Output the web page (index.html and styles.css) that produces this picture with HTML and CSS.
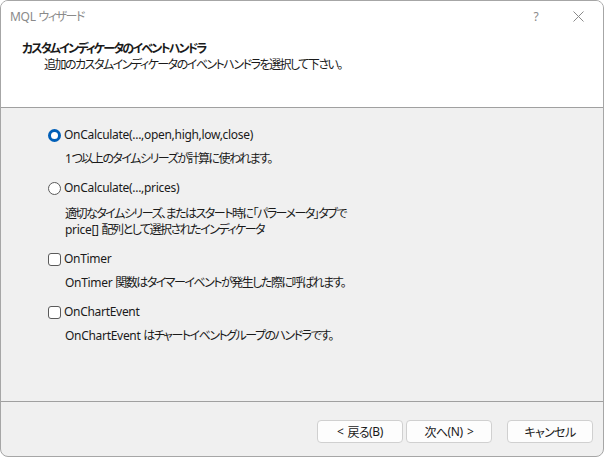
FILE: index.html
```html
<!DOCTYPE html>
<html lang="ja">
<head>
<meta charset="utf-8">
<title>MQL ウィザード</title>
<link rel="stylesheet" href="styles.css">
</head>
<body>
<div class="window">
  <div class="header">
    <div class="titlebar">
      <span class="title">MQL <span class="ja">ウィザード</span></span>
      <span class="tb-help">?</span>
      <span class="tb-close">
        <svg width="11" height="11" viewBox="0 0 11 11"><path d="M0.5 0.5L10.5 10.5M10.5 0.5L0.5 10.5" stroke="#8a8a8a" stroke-width="1" fill="none"/></svg>
      </span>
    </div>
    <div class="heading ja">カスタムインディケータのイベントハンドラ</div>
    <div class="subheading ja">追加のカスタムインディケータのイベントハンドラを選択して下さい。</div>
  </div>
  <div class="content">
    <div class="option">
      <div class="opt-row"><span class="radio checked"></span><span class="opt-label">OnCalculate(...,open,high,low,close)</span></div>
      <div class="desc">1<span class="ja">つ以上のタイムシリーズが計算に使われます。</span></div>
    </div>
    <div class="option">
      <div class="opt-row"><span class="radio"></span><span class="opt-label">OnCalculate(...,prices)</span></div>
      <div class="desc desc-2"><span class="ja">適切なタイムシリーズ、またはスタート時に「パラーメータ」タブで</span><br>price[] <span class="ja">配列として選択されたインディケータ</span></div>
    </div>
    <div class="option">
      <div class="opt-row"><span class="check"></span><span class="opt-label">OnTimer</span></div>
      <div class="desc">OnTimer <span class="ja">関数はタイマーイベントが発生した際に呼ばれます。</span></div>
    </div>
    <div class="option">
      <div class="opt-row"><span class="check"></span><span class="opt-label">OnChartEvent</span></div>
      <div class="desc">OnChartEvent <span class="ja">はチャートイベントグループのハンドラです。</span></div>
    </div>
  </div>
  <div class="footer">
    <div class="btn">&lt;<span class="ja gap">戻る</span>(B)</div>
    <div class="btn"><span class="ja">次へ</span>(N)<span class="gap">&gt;</span></div>
    <div class="btn btn-cancel"><span class="ja">キャンセル</span></div>
  </div>
</div>
</body>
</html>
```
FILE: styles.css
```css
html, body {
  margin: 0;
  padding: 0;
  background: #ffffff;
}
body {
  font-family: "Noto Sans", "Noto Sans CJK JP", sans-serif;
  font-size: 12px;
  letter-spacing: -0.3px;
  font-feature-settings: "palt";
  color: #1a1a1a;
}
.ja {
  letter-spacing: -1.5px;
}
.window {
  box-sizing: border-box;
  width: 604px;
  height: 457px;
  border: 1px solid #a6a6a6;
  border-radius: 8px;
  overflow: hidden;
  display: flex;
  flex-direction: column;
  background: #f0f0f0;
}
.header {
  background: #ffffff;
  height: 106px;
  border-bottom: 1px solid #a0a0a0;
  flex: none;
}
.titlebar {
  height: 30px;
  display: flex;
  align-items: center;
  padding-left: 9px;
}
.title {
  color: #8a8a8a;
  font-size: 12px;
  flex: 1;
}
.tb-help {
  color: #8a8a8a;
  font-size: 12px;
  width: 46px;
  text-align: center;
  margin-right: -4px;
}
.tb-close {
  width: 46px;
  display: flex;
  justify-content: center;
  margin-right: 2px;
}
.heading {
  font-weight: bold;
  padding-left: 21px;
  margin-top: 10px;
  line-height: 16px;
  letter-spacing: -1.8px;
}
.subheading {
  padding-left: 43px;
  line-height: 16px;
}
.content {
  flex: 1;
  padding: 19px 0 0 47px;
  border-bottom: 1px solid #a0a0a0;
}
.option {
  margin-bottom: 13px;
}
.opt-row {
  display: flex;
  align-items: center;
  height: 16px;
}
.radio {
  box-sizing: border-box;
  width: 13px;
  height: 13px;
  border: 1px solid #5a5a5a;
  border-radius: 50%;
  margin-right: 3px;
  background: #fff;
}
.radio.checked {
  border: 3.5px solid #005fb8;
  background: #ffffff;
}
.check {
  box-sizing: border-box;
  width: 13px;
  height: 13px;
  border: 1px solid #5a5a5a;
  border-radius: 3px;
  background: #fff;
  margin-right: 3px;
}
.opt-label {
  line-height: 16px;
}
.desc {
  padding-left: 17px;
  margin-top: 8px;
  line-height: 16px;
}
.desc-2 {
  margin-top: 10px;
}
.footer {
  height: 54px;
  flex: none;
  display: flex;
  align-items: flex-start;
  padding: 18px 0 0 316px;
  box-sizing: border-box;
}
.btn {
  box-sizing: border-box;
  width: 86px;
  height: 23px;
  border: 1px solid #d0d0d0;
  border-radius: 4px;
  background: #fdfdfd;
  display: flex;
  align-items: center;
  justify-content: center;
  margin-right: 3px;
}
.btn .ja {
  letter-spacing: -0.6px;
}
.btn .gap {
  margin-left: 4px;
}
.btn-cancel {
  margin-left: 12px;
}
```
